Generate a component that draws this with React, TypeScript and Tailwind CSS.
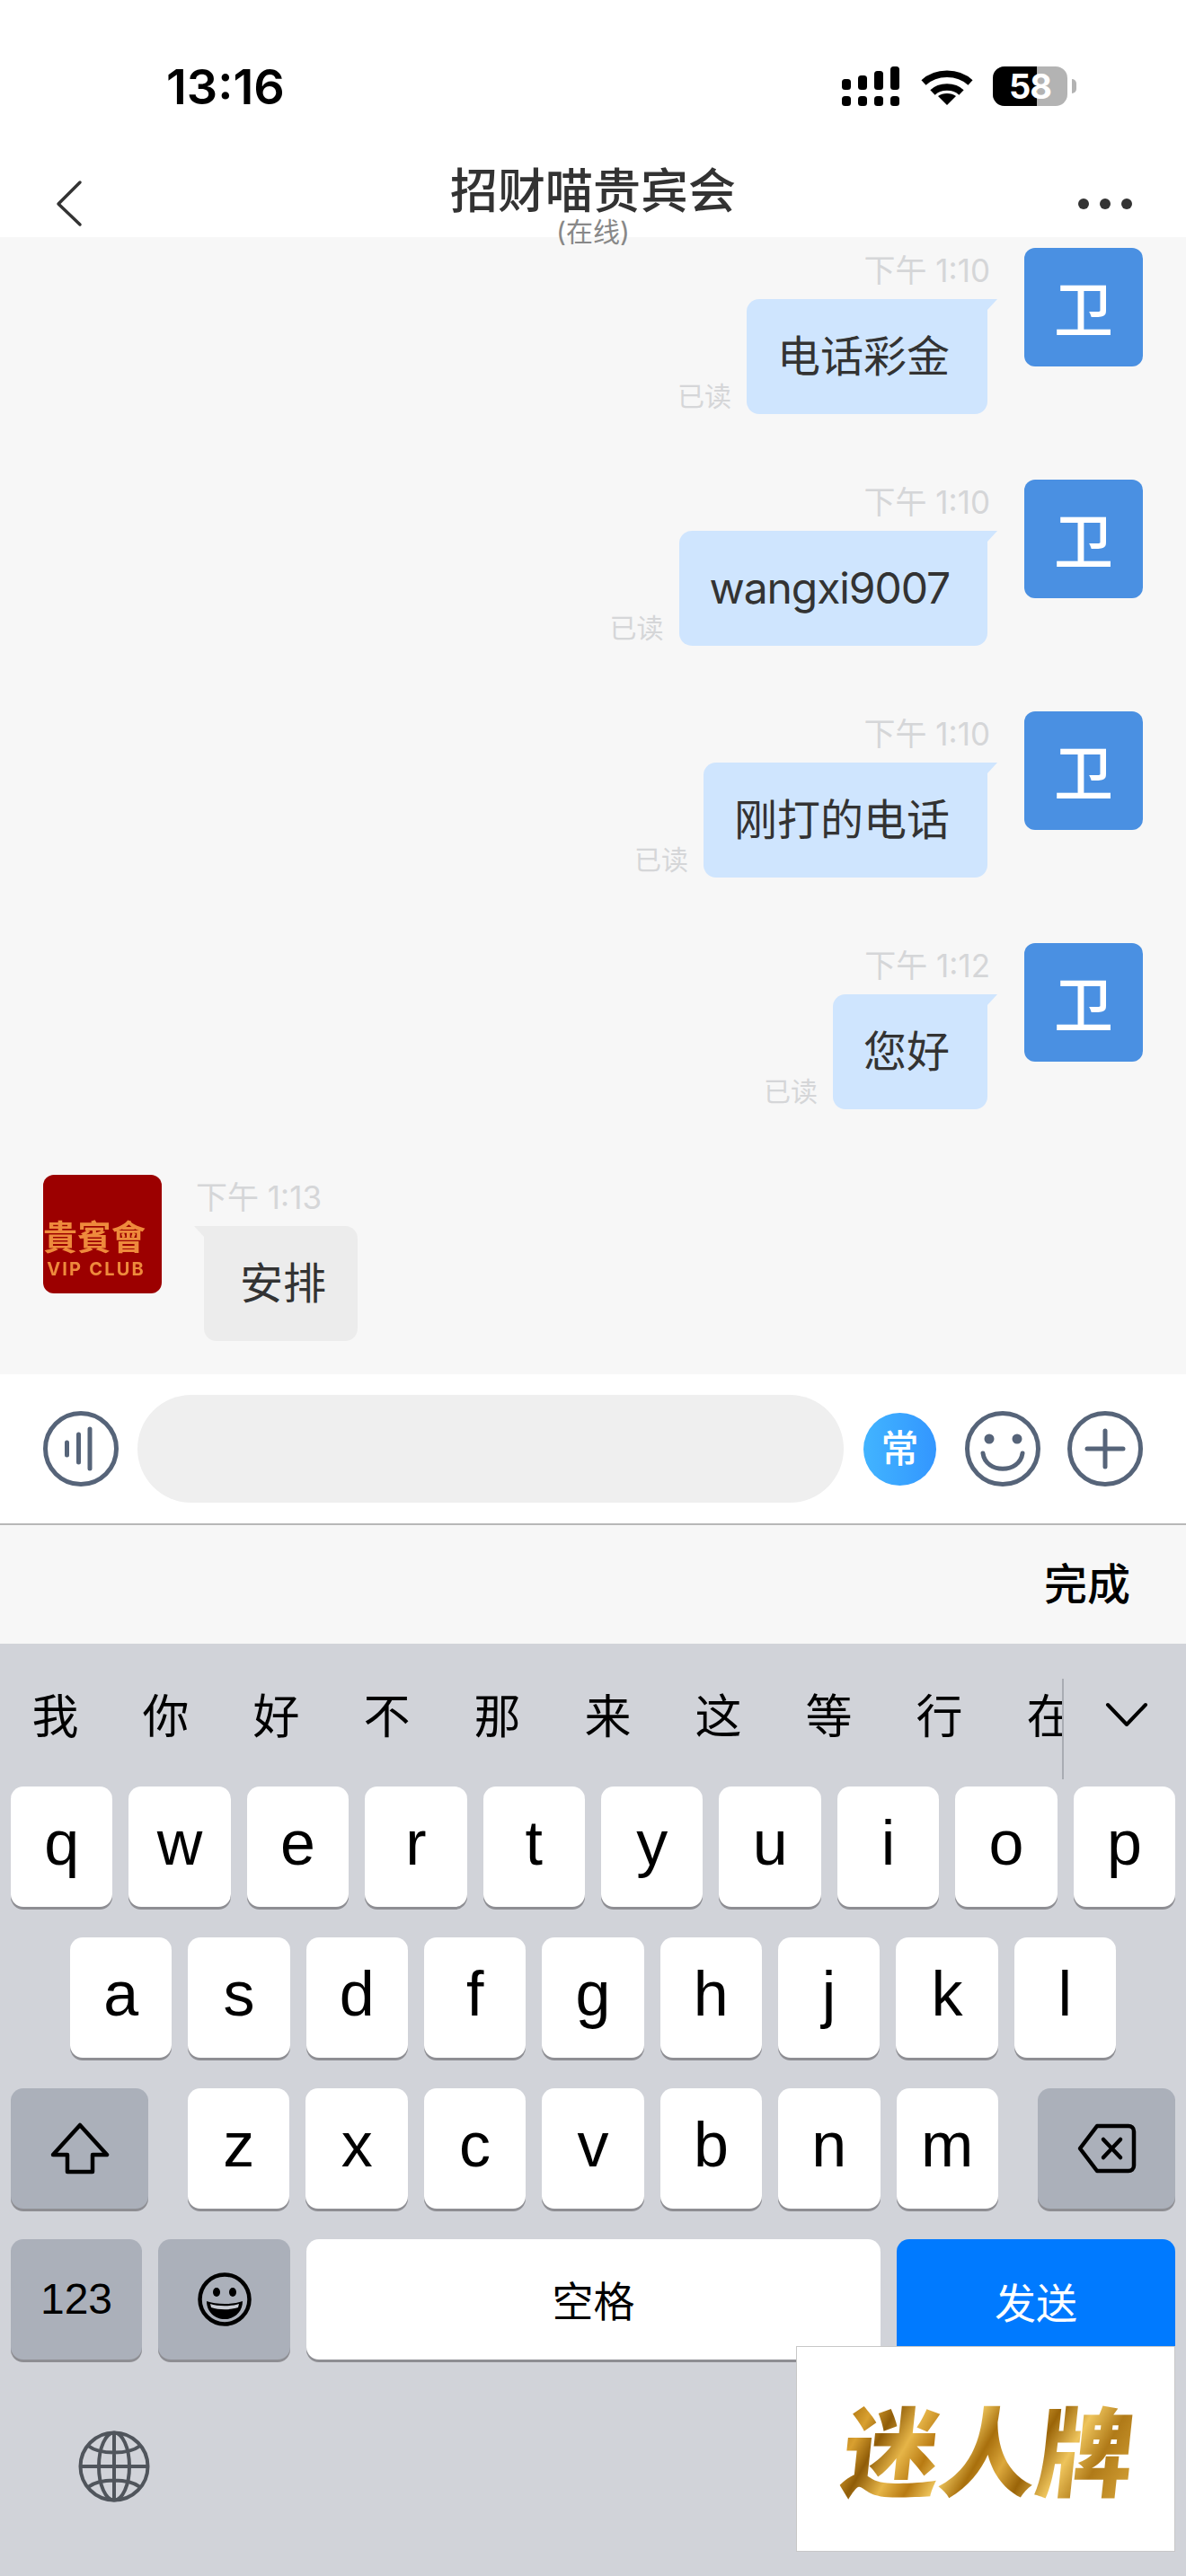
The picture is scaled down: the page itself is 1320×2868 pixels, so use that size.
import React from 'react';

const rowOne = ['q', 'w', 'e', 'r', 't', 'y', 'u', 'i', 'o', 'p'];
const rowTwo = ['a', 's', 'd', 'f', 'g', 'h', 'j', 'k', 'l'];
const rowThree = ['z', 'x', 'c', 'v', 'b', 'n', 'm'];
const candidates = ['我', '你', '好', '不', '那', '来', '这', '等', '行', '在'];

const messages = [
  { time: '下午 1:10', text: '电话彩金', latin: false },
  { time: '下午 1:10', text: 'wangxi9007', latin: true },
  { time: '下午 1:10', text: '刚打的电话', latin: false },
  { time: '下午 1:12', text: '您好', latin: false },
];

const LetterKey = ({ label }: { label: string }) => (
  <div className="flex h-[134px] flex-1 items-center justify-center rounded-[14px] bg-white pb-[8px] text-[70px] leading-none text-black shadow-[0_3px_0_#8e8e93] [font-family:'Liberation_Sans',sans-serif]">
    {label}
  </div>
);

const StatusIcons = () => (
  <div className="-mt-[2px] flex items-center">
    <svg width="64" height="44" viewBox="0 0 64 44" fill="#000">
      <rect x="0" y="14" width="10" height="12" rx="3.5" />
      <rect x="18" y="10" width="10" height="16" rx="3.5" />
      <rect x="36" y="5" width="10" height="21" rx="3.5" />
      <rect x="54" y="0" width="10" height="26" rx="3.5" />
      <rect x="0" y="33" width="10" height="11" rx="3.5" />
      <rect x="18" y="33" width="10" height="11" rx="3.5" />
      <rect x="36" y="33" width="10" height="11" rx="3.5" />
      <rect x="54" y="33" width="10" height="11" rx="3.5" />
    </svg>
    <svg className="ml-[24px]" width="58" height="42" viewBox="0 0 58 42" fill="none" stroke="#000" strokeWidth="7.5">
      <path d="M3 17C17 4 41 4 55 17" />
      <path d="M13 28C21 20 37 20 45 28" />
      <path d="M29 42L19 32C24 28 34 28 39 32Z" fill="#000" stroke="none" />
    </svg>
    <div className="relative ml-[22px] h-[44px] w-[83px] overflow-hidden rounded-[13px] bg-[#b3b3b3]">
      <div className="h-full w-[49px] bg-black" />
      <span className="absolute inset-0 flex items-center justify-center pb-[1px] text-[38px] font-bold leading-none tracking-[-1px] text-white">58</span>
    </div>
    <div className="ml-[5px] h-[16px] w-[5px] rounded-r-full bg-[#b3b3b3]" />
  </div>
);

const Tail = ({ side }: { side: 'left' | 'right' }) =>
  side === 'right' ? (
    <div className="absolute left-full top-0 h-[12px] w-[11px] bg-[#cfe5fe] [clip-path:polygon(0_0,100%_0,0_100%)]" />
  ) : (
    <div className="absolute right-full top-0 h-[12px] w-[11px] bg-[#ececec] [clip-path:polygon(0_0,100%_0,100%_100%)]" />
  );

const TimeLabel = ({ text }: { text: string }) => (
  <div className="flex h-[57px] items-center pb-[6px] text-[35px] leading-none text-[#d5d6d8]">{text}</div>
);

const SentRow = ({ time, text, latin }: { time: string; text: string; latin: boolean }) => (
  <div className="mb-[73px] flex justify-end pr-[48px]">
    <div className="mr-[41px] flex flex-col items-end">
      <div className="-mr-[3px]">
        <TimeLabel text={time} />
      </div>
      <div className="flex items-end">
        <span className="mb-[5px] mr-[17px] text-[30px] leading-none text-[#d5d6d8]">已读</span>
        <div className="relative flex h-[128px] items-center rounded-[14px] rounded-tr-none bg-[#cfe5fe] pl-[34px] pr-[42px] text-[48px] leading-none text-[#333]">
          <Tail side="right" />
          <span className={latin ? 'tracking-[-1.1px]' : ''}>{text}</span>
        </div>
      </div>
    </div>
    <div className="flex h-[132px] w-[132px] items-center justify-center rounded-[12px] bg-[#4a90e2] pt-[6px] text-[66px] font-medium leading-none text-white">
      卫
    </div>
  </div>
);

const ClubAvatar = () => (
  <div className="flex h-[132px] w-[132px] flex-col items-end overflow-hidden rounded-[12px] bg-[#9c0000] pr-[18px] pt-[50px] text-[#ee8a3c]">
    <div className="whitespace-nowrap text-[38px] font-bold leading-none blur-[0.6px]">尊貴賓會</div>
    <div className="mt-[7px] whitespace-nowrap text-[20px] font-bold leading-none tracking-[2.2px] blur-[0.5px]">VIP CLUB</div>
  </div>
);

export default function App() {
  return (
    <div className="flex h-[2868px] w-[1320px] flex-col overflow-hidden bg-white [font-family:Inter,'Noto_Sans_CJK_SC',sans-serif]">
      {/* Header */}
      <div className="relative z-10 h-[264px] bg-white">
        <div className="flex h-[194px] items-center justify-between pl-[185px] pr-[122px]">
          <span className="text-[54px] font-semibold leading-none text-black">13:16</span>
          <StatusIcons />
        </div>
        <div className="relative h-[70px]">
          <svg className="absolute left-[60px] top-[6px]" width="34" height="54" viewBox="0 0 34 54" fill="none" stroke="#333" strokeWidth="3.5" strokeLinecap="round" strokeLinejoin="round">
            <path d="M29 3L5 27L29 50" />
          </svg>
          <div className="absolute inset-x-0 -top-[7px] flex flex-col items-center">
            <div className="text-[53px] font-medium leading-none text-[#333]">招财喵贵宾会</div>
            <div className="mt-[3px] text-[30px] leading-none text-[#888]">(在线)</div>
          </div>
          <div className="absolute right-[60px] top-[27px] flex gap-[12px]">
            <div className="h-[12px] w-[12px] rounded-full bg-[#333]" />
            <div className="h-[12px] w-[12px] rounded-full bg-[#333]" />
            <div className="h-[12px] w-[12px] rounded-full bg-[#333]" />
          </div>
        </div>
      </div>

      {/* Messages */}
      <div className="h-[1266px] overflow-hidden bg-[#f7f7f7] pt-[12px]">
        {messages.map((m, i) => (
          <SentRow key={i} time={m.time} text={m.text} latin={m.latin} />
        ))}
        <div className="flex pl-[48px]">
          <ClubAvatar />
          <div className="ml-[38px] flex flex-col items-start">
            <TimeLabel text="下午 1:13" />
            <div className="relative ml-[9px] flex h-[128px] items-center rounded-[14px] rounded-tl-none bg-[#ececec] pl-[40px] pr-[35px] text-[48px] leading-none text-[#333]">
              <Tail side="left" />
              安排
            </div>
          </div>
        </div>
      </div>

      {/* Input bar */}
      <div className="flex h-[168px] items-center border-b-2 border-[#b8b8b8] bg-white pl-[48px]">
        <svg width="84" height="84" viewBox="0 0 84 84" fill="none" stroke="#566479" strokeWidth="5" strokeLinecap="round">
          <circle cx="42" cy="42" r="39.5" />
          <path d="M26.5 35V49M39.5 26V57M52 20V64" />
        </svg>
        <div className="ml-[21px] h-[120px] w-[786px] rounded-[60px] bg-[#efefef]" />
        <div className="ml-[22px] flex h-[81px] w-[81px] items-center justify-center rounded-full bg-gradient-to-r from-[#42b4ff] to-[#3396ff] text-[42px] font-medium leading-none text-white">
          常
        </div>
        <svg className="ml-[32px]" width="84" height="84" viewBox="0 0 84 84" fill="none" stroke="#566479" strokeWidth="5" strokeLinecap="round">
          <circle cx="42" cy="42" r="39.5" />
          <circle cx="27" cy="31" r="5.5" fill="#566479" stroke="none" />
          <circle cx="58" cy="31" r="5.5" fill="#566479" stroke="none" />
          <path d="M20 47C23 70 61 70 64 47" />
        </svg>
        <svg className="ml-[30px]" width="84" height="84" viewBox="0 0 84 84" fill="none" stroke="#566479" strokeWidth="5" strokeLinecap="round">
          <circle cx="42" cy="42" r="39.5" />
          <path d="M22 42H62M42 22V62" />
        </svg>
      </div>

      {/* Done bar */}
      <div className="flex h-[132px] items-center justify-end bg-[#f7f7f7] pr-[62px] text-[48px] font-medium leading-none text-black">
        完成
      </div>

      {/* Keyboard */}
      <div className="relative flex-1 bg-[#d1d3d9]">
        <div className="flex h-[159px]">
          <div className="mt-[39px] flex h-[112px] w-[1184px] overflow-hidden border-r-2 border-[#a9acb3]">
            {candidates.map((c) => (
              <div key={c} className="flex h-full w-[123px] shrink-0 items-center justify-center pb-[26px] text-[52px] leading-none text-black">
                {c}
              </div>
            ))}
          </div>
          <svg className="ml-[45px] mt-[64px]" width="50" height="30" viewBox="0 0 50 30" fill="none" stroke="#000" strokeWidth="4" strokeLinecap="round" strokeLinejoin="round">
            <path d="M4 4L25 26L46 4" />
          </svg>
        </div>

        <div className="flex flex-col gap-[34px]">
          <div className="flex gap-[18px] px-[12px]">
            {rowOne.map((k) => (
              <LetterKey key={k} label={k} />
            ))}
          </div>
          <div className="flex gap-[18px] px-[78px]">
            {rowTwo.map((k) => (
              <LetterKey key={k} label={k} />
            ))}
          </div>
          <div className="flex px-[12px]">
            <div className="flex h-[134px] w-[153px] items-center justify-center rounded-[14px] bg-[#abb0ba] shadow-[0_3px_0_#8e8e93]">
              <svg width="66" height="58" viewBox="0 0 66 58" fill="none" stroke="#000" strokeWidth="4.5" strokeLinejoin="round">
                <path d="M33 3L63 36H47V55H19V36H3Z" />
              </svg>
            </div>
            <div className="mx-[44px] flex flex-1 gap-[18px]">
              {rowThree.map((k) => (
                <LetterKey key={k} label={k} />
              ))}
            </div>
            <div className="flex h-[134px] w-[153px] items-center justify-center rounded-[14px] bg-[#abb0ba] shadow-[0_3px_0_#8e8e93]">
              <svg width="66" height="56" viewBox="0 0 66 56" fill="none" stroke="#000" strokeWidth="4.5" strokeLinecap="round" strokeLinejoin="round">
                <path d="M22 3H57C60 3 63 5 63 9V47C63 51 60 53 57 53H22L3 28Z" />
                <path d="M29 18L48 38M48 18L29 38" />
              </svg>
            </div>
          </div>
          <div className="flex gap-[18px] px-[12px]">
            <div className="flex h-[134px] w-[146px] items-center justify-center rounded-[14px] bg-[#abb0ba] text-[48px] leading-none text-black shadow-[0_3px_0_#8e8e93] [font-family:'Liberation_Sans',sans-serif]">
              123
            </div>
            <div className="flex h-[134px] w-[147px] items-center justify-center rounded-[14px] bg-[#abb0ba] shadow-[0_3px_0_#8e8e93]">
              <svg width="60" height="60" viewBox="0 0 60 60">
                <circle cx="30" cy="30" r="27.5" fill="none" stroke="#000" strokeWidth="4.5" />
                <ellipse cx="21" cy="22" rx="4" ry="5" fill="#000" />
                <ellipse cx="39" cy="22" rx="4" ry="5" fill="#000" />
                <path d="M10 32C20 36 40 36 50 32C50 44 41 52 30 52C19 52 10 44 10 32Z" fill="#000" />
                <path d="M14 35C22 38 38 38 46 35L45 39C36 42 24 42 15 39Z" fill="#c9ccd3" />
              </svg>
            </div>
            <div className="flex h-[134px] w-[639px] items-center justify-center rounded-[14px] bg-white pt-[4px] text-[46px] leading-none text-black shadow-[0_3px_0_#8e8e93]">
              空格
            </div>
            <div className="flex h-[134px] flex-1 items-start justify-center rounded-[14px] bg-[#007aff] pt-[48px] text-[46px] leading-none text-white">
              发送
            </div>
          </div>
        </div>

        <svg className="ml-[87px] mt-[79px]" width="80" height="80" viewBox="0 0 80 80" fill="none" stroke="#50555c" strokeWidth="4">
          <circle cx="40" cy="40" r="37.5" />
          <ellipse cx="40" cy="40" rx="17" ry="37.5" />
          <path d="M40 3V77M3 40H77M11 17C24 27 56 27 69 17M11 63C24 53 56 53 69 63" />
        </svg>

        {/* Watermark */}
        <div className="absolute left-[886px] top-[782px] flex h-[229px] w-[422px] items-center justify-center border border-[#c8c8c8] bg-white pl-[6px] pt-[10px]">
          <span className="-skew-x-6 whitespace-nowrap bg-[linear-gradient(115deg,#a86f0c_0%,#d9a030_8%,#8f5c08_15%,#e6b548_24%,#b87a12_32%,#f0c860_40%,#a86f0c_48%,#dca83c_56%,#9a6408_64%,#eec45c_74%,#b07a18_84%,#d8a63a_100%)] bg-clip-text text-[108px] font-black leading-none text-transparent">
            迷人牌
          </span>
        </div>
      </div>
    </div>
  );
}
